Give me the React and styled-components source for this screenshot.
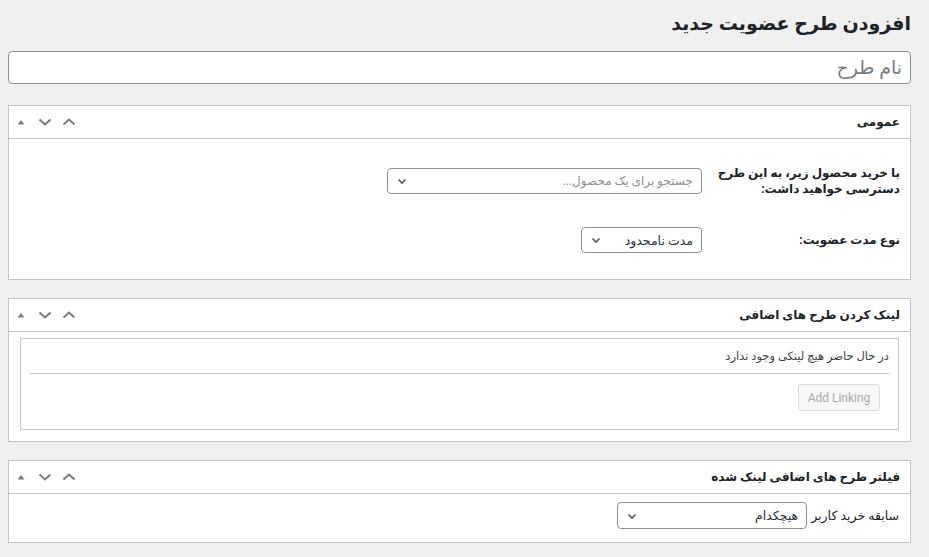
import styled, { createGlobalStyle } from 'styled-components';

const GlobalStyle = createGlobalStyle`
  body {
    margin: 0;
    background: #f0f0f1;
    font-family: Roboto, "DejaVu Sans", sans-serif;
    color: #1d2327;
  }
`;

const Page = styled.div`
  direction: rtl;
  padding: 6px 18px 0 8px;
`;

const Title = styled.h1`
  margin: 0;
  font-size: 19px;
  font-weight: 700;
  line-height: 36px;
  color: #1d2327;
`;

const NameInput = styled.input`
  display: block;
  box-sizing: border-box;
  width: 100%;
  height: 33px;
  margin: 9px 0 21px;
  padding: 0 8px;
  border: 1px solid #8c8f94;
  border-radius: 4px;
  background: #fff;
  font-family: inherit;
  font-size: 19px;
  direction: rtl;

  &::placeholder {
    color: #787c82;
  }
`;

const Postbox = styled.section`
  background: #fff;
  border: 1px solid #c3c4c7;
  margin-bottom: 18px;
`;

const Header = styled.div`
  height: 32px;
  display: flex;
  align-items: center;
  justify-content: space-between;
  padding: 0 10px 0 4px;
  border-bottom: 1px solid #c3c4c7;
`;

const HeaderTitle = styled.h2`
  margin: 0;
  font-size: 12px;
  font-weight: 700;
`;

const Handles = styled.div`
  display: flex;
  direction: ltr;
  align-items: center;
  gap: 8px;
  color: #787c82;
`;

const HandleIcon = styled.svg`
  display: block;
  width: 16px;
  height: 16px;
`;

const Body = styled.div`
  padding: ${(p) => p.$pad || '0'};
`;

const FormRow = styled.div`
  display: grid;
  grid-template-columns: 200px 1fr;
  align-items: center;
  padding: 15px 0;
`;

const Label = styled.label`
  font-size: 12px;
  font-weight: 700;
  line-height: 16px;
  padding-right: 10px;
  max-width: 184px;
`;

const SelectBox = styled.div`
  box-sizing: border-box;
  width: ${(p) => p.$w}px;
  height: ${(p) => p.$h || 26}px;
  margin-right: ${(p) => p.$mr || 0}px;
  display: flex;
  align-items: center;
  justify-content: space-between;
  padding: 0 8px 0 8px;
  border: 1px solid #8c8f94;
  border-radius: 4px;
  background: #fff;
  font-size: ${(p) => (p.$placeholder ? 12 : 12.5)}px;
  color: ${(p) => (p.$placeholder ? '#8c8f94' : '#2c3338')};
`;

const Chevron = styled.svg`
  display: block;
  width: 12px;
  height: 12px;
  color: #50575e;
`;

const LinkBox = styled.div`
  margin: 6px 11px 11px;
  border: 1px solid #c3c4c7;
  padding: 8px 9px 18px;
`;

const Note = styled.p`
  margin: 0 0 10px;
  font-size: 11.5px;
  line-height: 18px;
  color: #3c434a;
  padding-bottom: 8px;
  border-bottom: 1px solid #c3c4c7;
`;

const DisabledButton = styled.button`
  display: block;
  height: 27px;
  width: 82px;
  margin-right: 9px;
  border: 1px solid #dcdcde;
  border-radius: 3px;
  background: #f6f7f7;
  color: #a7aaad;
  font-family: inherit;
  font-size: 12px;
  cursor: default;
`;

const InlineRow = styled.div`
  display: flex;
  align-items: center;
  gap: 4px;
  padding: 8px 11px 13px;
`;

const InlineLabel = styled.span`
  font-size: 12.5px;
  font-weight: 400;
  color: #1d2327;
`;

const ChevronDown = () => (
  <Chevron viewBox="0 0 12 12" fill="none" stroke="currentColor" strokeWidth="1.6">
    <polyline points="2.5,4.5 6,8 9.5,4.5" />
  </Chevron>
);

const HandleButtons = () => (
  <Handles>
    <HandleIcon viewBox="0 0 16 16">
      <polygon points="4.5,10.5 8,6 11.5,10.5" fill="currentColor" />
    </HandleIcon>
    <HandleIcon viewBox="0 0 16 16" fill="none" stroke="currentColor" strokeWidth="2">
      <polyline points="2.5,5.5 8,10.5 13.5,5.5" />
    </HandleIcon>
    <HandleIcon viewBox="0 0 16 16" fill="none" stroke="currentColor" strokeWidth="2">
      <polyline points="2.5,10.5 8,5.5 13.5,10.5" />
    </HandleIcon>
  </Handles>
);

const Panel = ({ title, children }) => (
  <Postbox>
    <Header>
      <HeaderTitle>{title}</HeaderTitle>
      <HandleButtons />
    </Header>
    {children}
  </Postbox>
);

export default function App() {
  return (
    <>
      <GlobalStyle />
      <Page>
        <Title>افزودن طرح عضویت جدید</Title>
        <NameInput placeholder="نام طرح" />

        <Panel title="عمومی">
          <Body $pad="11px 0 11px">
            <FormRow>
              <Label>با خرید محصول زیر، به این طرح دسترسی خواهید داشت:</Label>
              <SelectBox $w={315} $mr={8} $placeholder>
                <span>جستجو برای یک محصول...</span>
                <ChevronDown />
              </SelectBox>
            </FormRow>
            <FormRow>
              <Label>نوع مدت عضویت:</Label>
              <SelectBox $w={121} $mr={8}>
                <span>مدت نامحدود</span>
                <ChevronDown />
              </SelectBox>
            </FormRow>
          </Body>
        </Panel>

        <Panel title="لینک کردن طرح های اضافی">
          <LinkBox>
            <Note>در حال حاضر هیچ لینکی وجود ندارد</Note>
            <DisabledButton disabled>Add Linking</DisabledButton>
          </LinkBox>
        </Panel>

        <Panel title="فیلتر طرح های اضافی لینک شده">
          <InlineRow>
            <InlineLabel>سابقه خرید کاربر</InlineLabel>
            <SelectBox $w={190} $h={27}>
              <span>هیچکدام</span>
              <ChevronDown />
            </SelectBox>
          </InlineRow>
        </Panel>
      </Page>
    </>
  );
}
